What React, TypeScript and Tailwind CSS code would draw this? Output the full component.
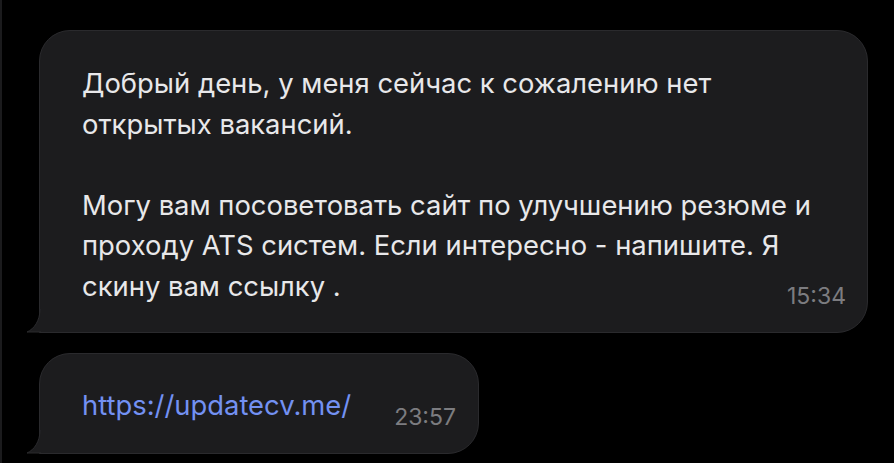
import React from 'react';

// Хвостик пузыря сообщения (нижний левый угол)
const Tail: React.FC = () => (
  <svg
    className="absolute bottom-[-1px] left-[-13px]"
    width="14"
    height="24"
    viewBox="0 0 14 24"
  >
    <path d="M13 0 C13 12 7 20 0 23 L14 23 L14 0 Z" fill="#1c1c1e" />
    <path d="M13 0 C13 12 7 20 0 23 L14 23" fill="none" stroke="#2a2a2d" strokeWidth="1" />
  </svg>
);

interface BubbleProps {
  className?: string;
  children: React.ReactNode;
}

const Bubble: React.FC<BubbleProps> = ({ className, children }) => (
  <div
    className={`relative rounded-[31px] rounded-bl-none border border-[#2a2a2d] bg-[#1c1c1e] ${className}`}
  >
    {children}
    <Tail />
  </div>
);

const Time: React.FC<{ value: string }> = ({ value }) => (
  <span className="block text-[23px] leading-[24px] text-[#7c7c80]">{value}</span>
);

export default function App() {
  return (
    <div
      className="flex h-[463px] w-[894px] bg-black"
      style={{ fontFamily: 'Inter, "Noto Sans", sans-serif' }}
    >
      <div className="h-full w-[2px] bg-[#1b1b1d]" />
      <div className="flex flex-col gap-[20px] pl-[37px] pt-[30px]">
        <Bubble className="h-[303px] w-[829px] pl-[42px] pr-[21px] pt-[32px]">
          <div className="text-[27.4px] leading-[40.5px] text-[#e8e8ea]">
            <p>Добрый день, у меня сейчас к сожалению нет</p>
            <p>открытых вакансий.</p>
            <p>&nbsp;</p>
            <p>Могу вам посоветовать сайт по улучшению резюме и</p>
            <p>проходу ATS систем. Если интересно - напишите. Я</p>
            <div className="flex items-start justify-between">
              <span>скину вам ссылку .</span>
              <span className="mt-[18px]">
                <Time value="15:34" />
              </span>
            </div>
          </div>
        </Bubble>
        <Bubble className="flex h-[101px] w-[440px] items-start justify-between pl-[42px] pr-[22px] pt-[31px]">
          <span className="text-[27.4px] leading-[40px] text-[#7391f2]">https://updatecv.me/</span>
          <span className="mt-[20px]">
            <Time value="23:57" />
          </span>
        </Bubble>
      </div>
    </div>
  );
}
